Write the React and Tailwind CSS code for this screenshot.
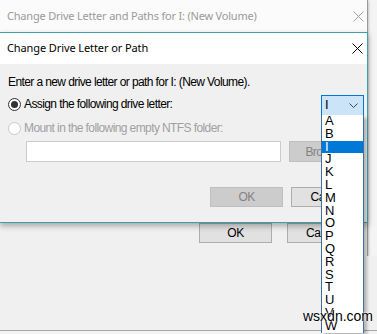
import React from "react";

const LETTERS = ["A", "B", "I", "J", "K", "L", "M", "N", "O", "P", "Q", "R", "S", "T", "U", "V", "W"];

function CloseIcon({ color }) {
  return (
    <svg width="11" height="11" viewBox="0 0 11 11" className="shrink-0">
      <path d="M0.5 0.5 L10.5 10.5 M10.5 0.5 L0.5 10.5" stroke={color} strokeWidth="1" fill="none" />
    </svg>
  );
}

function Radio({ checked, disabled }) {
  return (
    <span
      className={
        "flex h-[13px] w-[13px] shrink-0 items-center justify-center rounded-full border bg-white " +
        (disabled ? "border-[#c8c8c8]" : "border-[#333333]")
      }
    >
      {checked && <span className="h-[7px] w-[7px] rounded-full bg-[#333333]" />}
    </span>
  );
}

function DropList() {
  return (
    <div className="absolute left-[321px] top-[115px] w-[43px] border-x border-[#3d6fa0] bg-white shadow-[3px_3px_3px_rgba(0,0,0,0.25)]">
      {LETTERS.map((l) => (
        <div
          key={l}
          className={
            "h-[12.8px] pl-[3px] text-[13px] leading-[12.8px] " +
            (l === "I" ? "bg-[#0078d7] text-white" : "text-black")
          }
        >
          {l}
        </div>
      ))}
    </div>
  );
}

export default function App() {
  return (
    <div className="relative h-[334px] w-[377px] overflow-hidden bg-[#f4f4f4] font-['Liberation_Sans',sans-serif]">
      {/* window behind */}
      <div className="flex h-[256px] w-[368px] flex-col border-r border-[#9a9a9a] bg-[#f0f0f0] shadow-[0_1px_3px_rgba(0,0,0,0.35)]">
        <div className="flex h-[32px] items-center justify-between bg-[#fbfbfb] pl-[7px] pr-[3px]">
          <span className="font-['Noto_Sans',sans-serif] text-[11px] tracking-[-0.2px] text-[#9a9a9a]">
            Change Drive Letter and Paths for I: (New Volume)
          </span>
          <CloseIcon color="#a0a0a0" />
        </div>
        <div className="flex-1" />
        <div className="flex justify-end gap-[15px] pb-[13px] pr-[7px] text-[12px] tracking-[-0.4px]">
          <div className="flex h-[20px] w-[73px] items-center justify-center border border-[#adadad] bg-[#e1e1e1] text-black">
            OK
          </div>
          <div className="flex h-[20px] w-[73px] items-center justify-center border border-[#adadad] bg-[#e1e1e1] text-black">
            Cancel
          </div>
        </div>
      </div>
      <div className="h-[75px] border-b border-[#a8a8a8] bg-[#f0f0f0]" />

      {/* front dialog */}
      <div className="absolute left-0 top-[32px] flex h-[191px] w-[368px] flex-col border-y border-r border-[#3e9fab] bg-[#f0f0f0] shadow-[0_3px_6px_rgba(0,0,0,0.3)]">
        <div className="flex h-[31px] items-center justify-between bg-white pl-[7px] pr-[4px]">
          <span className="font-['Noto_Sans',sans-serif] text-[11px] tracking-[-0.1px] text-black">Change Drive Letter or Path</span>
          <CloseIcon color="#000000" />
        </div>
        <div className="flex flex-col pl-[8px] pr-[3px] pt-[10px] text-[12px] tracking-[-0.6px]">
          <p className="h-[16px] leading-[16px] text-black">Enter a new drive letter or path for I: (New Volume).</p>
          <div className="mt-[6px] flex h-[16px] items-center justify-between">
            <div className="flex items-center gap-[3px]">
              <Radio checked />
              <span className="text-black">Assign the following drive letter:</span>
            </div>
            <div className="mt-[2px] flex h-[21px] w-[43px] items-center justify-between border border-[#0078d7] bg-[#cce4f7] pl-[3px] pr-[5px]">
              <span className="text-[13px] text-black">I</span>
              <svg width="9" height="5" viewBox="0 0 9 5">
                <path d="M0.5 0.5 L4.5 4.5 L8.5 0.5" stroke="#444444" strokeWidth="1" fill="none" />
              </svg>
            </div>
          </div>
          <div className="mt-[8px] flex h-[16px] items-center gap-[3px]">
            <Radio disabled />
            <span className="text-[#a0a0a0]">Mount in the following empty NTFS folder:</span>
          </div>
          <div className="ml-[18px] mt-[5px] flex gap-[8px]">
            <div className="h-[21px] w-[257px] border border-[#cccccc] bg-white" />
            <div className="flex h-[21px] w-[75px] items-center border border-[#bfbfbf] bg-[#cccccc] pl-[15px] text-[#838383]">
              Browse...
            </div>
          </div>
          <div className="ml-[202px] mt-[25px] flex gap-[8px]">
            <div className="flex h-[20px] w-[73px] items-center justify-center border border-[#bfbfbf] bg-[#cccccc] text-[#838383]">
              OK
            </div>
            <div className="flex h-[20px] w-[73px] items-center justify-center border border-[#adadad] bg-[#e1e1e1] text-black">
              Cancel
            </div>
          </div>
        </div>
      </div>

      <DropList />

      <div className="absolute left-[303px] top-[306px] text-[14px] text-black [text-shadow:0_0_2px_#ffffff,0_0_2px_#ffffff]">
        wsxdn.com
      </div>
    </div>
  );
}
